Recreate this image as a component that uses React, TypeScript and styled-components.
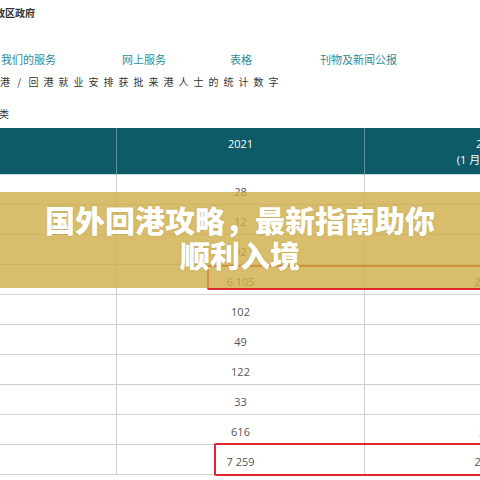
import React from "react";
import styled, { createGlobalStyle } from "styled-components";

const Global = createGlobalStyle`
  html, body { margin: 0; padding: 0; background: #ffffff; }
  body { width: 480px; height: 480px; overflow: hidden; }
`;

const Page = styled.div`
  position: relative;
  width: 480px;
  height: 480px;
  overflow: hidden;
  background: #fff;
  font-family: "Noto Sans CJK SC", "Open Sans", sans-serif;
`;

const Brand = styled.div`
  height: 26px;
  line-height: 26px;
  margin-left: -55px;
  font-size: 10px;
  font-weight: 700;
  color: #333;
  white-space: nowrap;
`;

const Nav = styled.nav`
  margin-top: 20px;
  height: 26px;
  display: grid;
  grid-template-columns: 121px 108px 90px auto;
  padding-left: 1px;
  align-items: center;
`;

const NavItem = styled.span`
  font-size: 11px;
  line-height: 26px;
  color: #2b8c99;
  white-space: nowrap;
`;

const Title = styled.div`
  height: 20px;
  line-height: 20px;
  font-size: 10px;
  letter-spacing: 5px;
  word-spacing: -5px;
  color: #333;
  white-space: nowrap;
`;

const Category = styled.div`
  margin-top: 12px;
  margin-left: -11px;
  height: 20px;
  line-height: 20px;
  font-size: 10px;
  color: #333;
`;

const Table = styled.div`
  margin-top: 4px;
  display: grid;
  grid-template-columns: 116px 248px 248px;
  width: 612px;
`;

const HeadCell = styled.div<{ $divider?: boolean }>`
  height: 47px;
  background: #0d5b68;
  border-bottom: 1px solid #c7dbe0;
  border-left: ${(p) => (p.$divider ? "1px solid #5f8f98" : "none")};
  color: #fff;
  font-family: "Open Sans", "Noto Sans CJK SC", sans-serif;
  font-size: 11px;
  line-height: 16px;
  display: flex;
  flex-direction: column;
  align-items: center;
  padding-top: 8px;
  box-sizing: border-box;
  white-space: nowrap;
`;

const Cell = styled.div<{ $divider?: boolean }>`
  height: 30px;
  box-sizing: border-box;
  border-bottom: 1px solid #cfcfcf;
  border-left: ${(p) => (p.$divider ? "1px solid #cfcfcf" : "none")};
  color: #555;
  font-family: "Open Sans", sans-serif;
  font-size: 11px;
  display: flex;
  align-items: center;
  justify-content: center;
  padding-top: 3px;
  white-space: nowrap;
`;

const Highlight = styled.div<{ $top: number; $left: number; $height: number }>`
  position: absolute;
  top: ${(p) => p.$top}px;
  left: ${(p) => p.$left}px;
  width: 320px;
  height: ${(p) => p.$height}px;
  box-sizing: border-box;
  border: 2px solid #e0282a;
  border-radius: 2px;
`;

const Banner = styled.div`
  position: absolute;
  top: 192px;
  left: 0;
  width: 480px;
  height: 96px;
  background: rgba(206, 174, 71, 0.8);
  display: flex;
  justify-content: center;
  padding-top: 10px;
  box-sizing: border-box;
`;

const BannerText = styled.h1`
  margin: 0;
  max-width: 400px;
  text-align: center;
  color: #fff;
  font-family: "Noto Sans CJK SC", sans-serif;
  font-weight: 900;
  font-size: 30px;
  line-height: 35px;
  text-shadow: 0 0 2px rgba(120, 90, 20, 0.25);
`;

const rows: [string, string][] = [
  ["28", "9"],
  ["12", "5"],
  ["92", "31"],
  ["6 105", "2 634"],
  ["102", "47"],
  ["49", "18"],
  ["122", "56"],
  ["33", "14"],
  ["616", "312"],
  ["7 259", "2 917"],
];

export default function App() {
  return (
    <Page>
      <Global />
      <Brand>香港特别行政区政府</Brand>
      <Nav>
        <NavItem>我们的服务</NavItem>
        <NavItem>网上服务</NavItem>
        <NavItem>表格</NavItem>
        <NavItem>刊物及新闻公报</NavItem>
      </Nav>
      <Title>港 / 回港就业安排获批来港人士的统计数字</Title>
      <Category>种类</Category>
      <Table>
        <HeadCell />
        <HeadCell $divider>2021</HeadCell>
        <HeadCell $divider>
          <span>2022</span>
          <span>(1 月 至 6 月)</span>
        </HeadCell>
        {rows.map(([a, b], i) => (
          <React.Fragment key={i}>
            <Cell />
            <Cell $divider>{a}</Cell>
            <Cell $divider>{b}</Cell>
          </React.Fragment>
        ))}
      </Table>
      <Highlight $top={265} $left={207} $height={25} />
      <Highlight $top={443} $left={214} $height={33} />
      <Banner>
        <BannerText>国外回港攻略，最新指南助你顺利入境</BannerText>
      </Banner>
    </Page>
  );
}
